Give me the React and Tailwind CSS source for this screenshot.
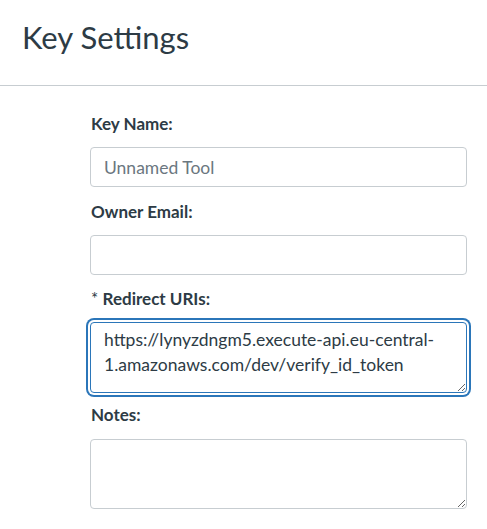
export default function App() {
  const font = { fontFamily: 'Lato, "Noto Sans", sans-serif' };
  const label = "block text-[17px] leading-[24px] font-bold text-[#2d3b45]";
  const input =
    "block w-[377px] h-[40px] rounded-[4px] border border-[#c7cdd1] bg-white px-[13px] text-[17.5px] text-[#2d3b45] placeholder:text-[#6b7780] outline-none";
  return (
    <div className="w-[487px] h-[529px] bg-white overflow-hidden" style={font}>
      <div className="h-[86px] border-b border-[#c7cdd1] pl-[22px] pt-[19px]">
        <h1 className="text-[31px] leading-[36px] font-normal text-[#2d3b45]">Key Settings</h1>
      </div>
      <div className="pl-[90px] pt-[26px]">
        <label className={label + " pl-[1px]"}>Key Name:</label>
        <input className={input + " mt-[11px]"} placeholder="Unnamed Tool" />
        <label className={label + " pl-[1px] mt-[13px]"}>Owner Email:</label>
        <input className={input + " mt-[11px]"} />
        <label className={label + " pl-[1px] mt-[12px]"}>
          <span className="font-normal">* </span>Redirect URIs:
        </label>
        <textarea
          className="block mt-[11px] w-[377px] h-[71px] rounded-[4px] border border-[#2b76b9] bg-white px-[13px] pt-[4px] text-[17.5px] leading-[25px] text-[#2d3b45] outline-none shadow-[0_0_0_2px_#ffffff,0_0_0_4px_#2b76b9]"
          defaultValue="https://lynyzdngm5.execute-api.eu-central-1.amazonaws.com/dev/verify_id_token"
        />
        <label className={label + " pl-[1px] mt-[10px]"}>Notes:</label>
        <textarea className="block mt-[12px] w-[377px] h-[70px] rounded-[4px] border border-[#c7cdd1] bg-white px-[13px] pt-[4px] text-[17.5px] leading-[25px] text-[#2d3b45] outline-none" />
      </div>
    </div>
  );
}
